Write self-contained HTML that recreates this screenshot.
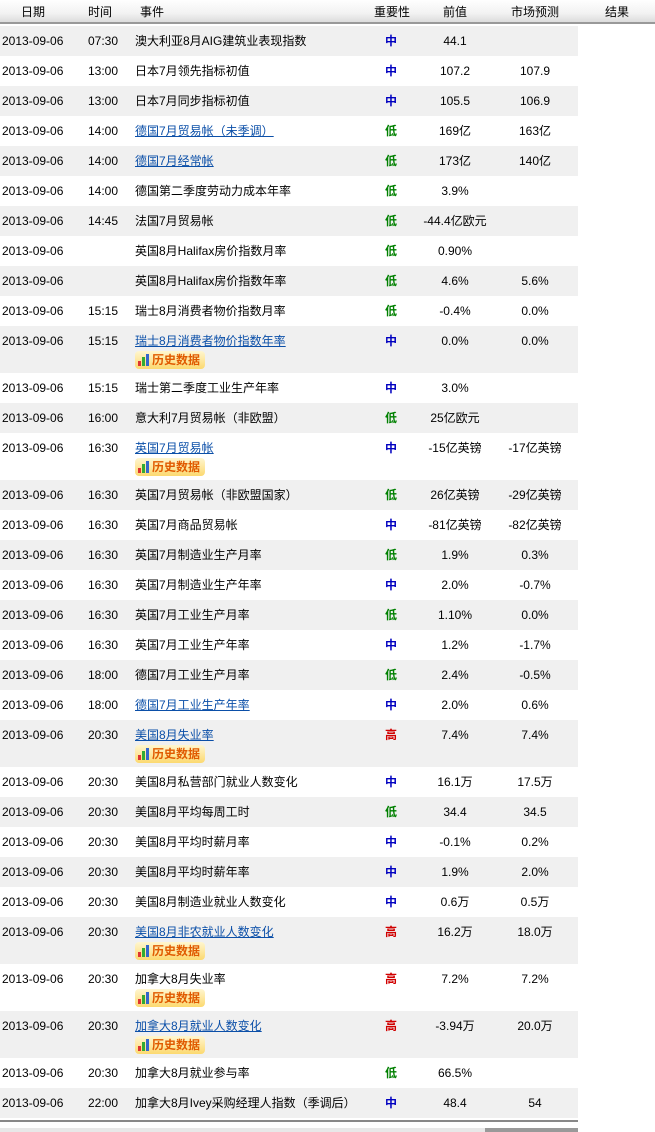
<!DOCTYPE html>
<html><head><meta charset="utf-8"><style>
body{margin:0;width:655px;height:1132px;background:#fff;font-family:"Liberation Sans","WenQuanYi Zen Hei","Noto Sans CJK SC",sans-serif;font-size:12px;color:#000;position:relative;overflow:hidden}
.hd{position:absolute;left:0;top:0;width:655px;height:22px;background:linear-gradient(#fff,#f2f2f2 60%,#dcdcdc);border-bottom:2px solid #999}
.hd span,.r span{position:absolute;white-space:nowrap;line-height:14px;height:14px}
.hd span{top:5px;font-size:12px}
.r{position:absolute;left:0;width:578px}
.g{background:#f0f0f0}
.r span{top:8px}
.d{left:2px}.t{left:88px}.e{left:135px}
.i{left:385px;font-weight:bold}
.m{color:#0000c0}.l{color:#008000}.h{color:#d00000}
.p{left:415px;width:80px;text-align:center}
.f{left:495px;width:80px;text-align:center}
a{color:#0b4fa8;text-decoration:underline}
.hs{position:absolute;left:135px;top:25px;width:70px;height:18px;background:linear-gradient(#fff6d0,#fcd970);border-radius:4px}
.hs b{position:absolute;left:17px;top:2px;color:#e05a00;font-size:12px;line-height:14px}
.hs i{position:absolute;bottom:3px;width:3px}
</style></head><body>
<div class="hd"><span style="left:21px">日期</span><span style="left:88px">时间</span><span style="left:140px">事件</span><span style="left:374px">重要性</span><span style="left:443px">前值</span><span style="left:511px">市场预测</span><span style="left:605px">结果</span></div>
<div id="rows"></div>
<div style="position:absolute;left:0;top:1120px;width:578px;height:2px;background:#888"></div>
<div style="position:absolute;left:0;top:1128px;width:578px;height:4px;background:#e8e8e8"></div>
<div style="position:absolute;left:485px;top:1128px;width:93px;height:4px;background:#999"></div>
<script>
var R=[
["07:30","澳大利亚8月AIG建筑业表现指数","m","44.1","",0,0],
["13:00","日本7月领先指标初值","m","107.2","107.9",0,0],
["13:00","日本7月同步指标初值","m","105.5","106.9",0,0],
["14:00","德国7月贸易帐（未季调）","l","169亿","163亿",1,0],
["14:00","德国7月经常帐","l","173亿","140亿",1,0],
["14:00","德国第二季度劳动力成本年率","l","3.9%","",0,0],
["14:45","法国7月贸易帐","l","-44.4亿欧元","",0,0],
["","英国8月Halifax房价指数月率","l","0.90%","",0,0],
["","英国8月Halifax房价指数年率","l","4.6%","5.6%",0,0],
["15:15","瑞士8月消费者物价指数月率","l","-0.4%","0.0%",0,0],
["15:15","瑞士8月消费者物价指数年率","m","0.0%","0.0%",1,1],
["15:15","瑞士第二季度工业生产年率","m","3.0%","",0,0],
["16:00","意大利7月贸易帐（非欧盟）","l","25亿欧元","",0,0],
["16:30","英国7月贸易帐","m","-15亿英镑","-17亿英镑",1,1],
["16:30","英国7月贸易帐（非欧盟国家）","l","26亿英镑","-29亿英镑",0,0],
["16:30","英国7月商品贸易帐","m","-81亿英镑","-82亿英镑",0,0],
["16:30","英国7月制造业生产月率","l","1.9%","0.3%",0,0],
["16:30","英国7月制造业生产年率","m","2.0%","-0.7%",0,0],
["16:30","英国7月工业生产月率","l","1.10%","0.0%",0,0],
["16:30","英国7月工业生产年率","m","1.2%","-1.7%",0,0],
["18:00","德国7月工业生产月率","l","2.4%","-0.5%",0,0],
["18:00","德国7月工业生产年率","m","2.0%","0.6%",1,0],
["20:30","美国8月失业率","h","7.4%","7.4%",1,1],
["20:30","美国8月私营部门就业人数变化","m","16.1万","17.5万",0,0],
["20:30","美国8月平均每周工时","l","34.4","34.5",0,0],
["20:30","美国8月平均时薪月率","m","-0.1%","0.2%",0,0],
["20:30","美国8月平均时薪年率","m","1.9%","2.0%",0,0],
["20:30","美国8月制造业就业人数变化","m","0.6万","0.5万",0,0],
["20:30","美国8月非农就业人数变化","h","16.2万","18.0万",1,1],
["20:30","加拿大8月失业率","h","7.2%","7.2%",0,1],
["20:30","加拿大8月就业人数变化","h","-3.94万","20.0万",1,1],
["20:30","加拿大8月就业参与率","l","66.5%","",0,0],
["22:00","加拿大8月Ivey采购经理人指数（季调后）","m","48.4","54",0,0]];
var y=26,h="",lab={m:"中",l:"低",h:"高"};
R.forEach(function(r,k){var H=r[6]?47:30;
h+='<div class="r'+(k%2==0?' g':'')+'" style="top:'+y+'px;height:'+H+'px"><span class="d">2013-09-06</span><span class="t">'+r[0]+'</span><span class="e">'+(r[5]?'<a>'+r[1]+'</a>':r[1])+'</span><span class="i '+r[2]+'">'+lab[r[2]]+'</span><span class="p">'+r[3]+'</span><span class="f">'+r[4]+'</span>'+
(r[6]?'<div class="hs"><i style="left:3px;height:5px;background:#d33"></i><i style="left:7px;height:9px;background:#3a3"></i><i style="left:11px;height:12px;background:#36c"></i><b>历史数据</b></div>':'')+'</div>';y+=H;});
document.getElementById("rows").innerHTML=h;
</script>
</body></html>
